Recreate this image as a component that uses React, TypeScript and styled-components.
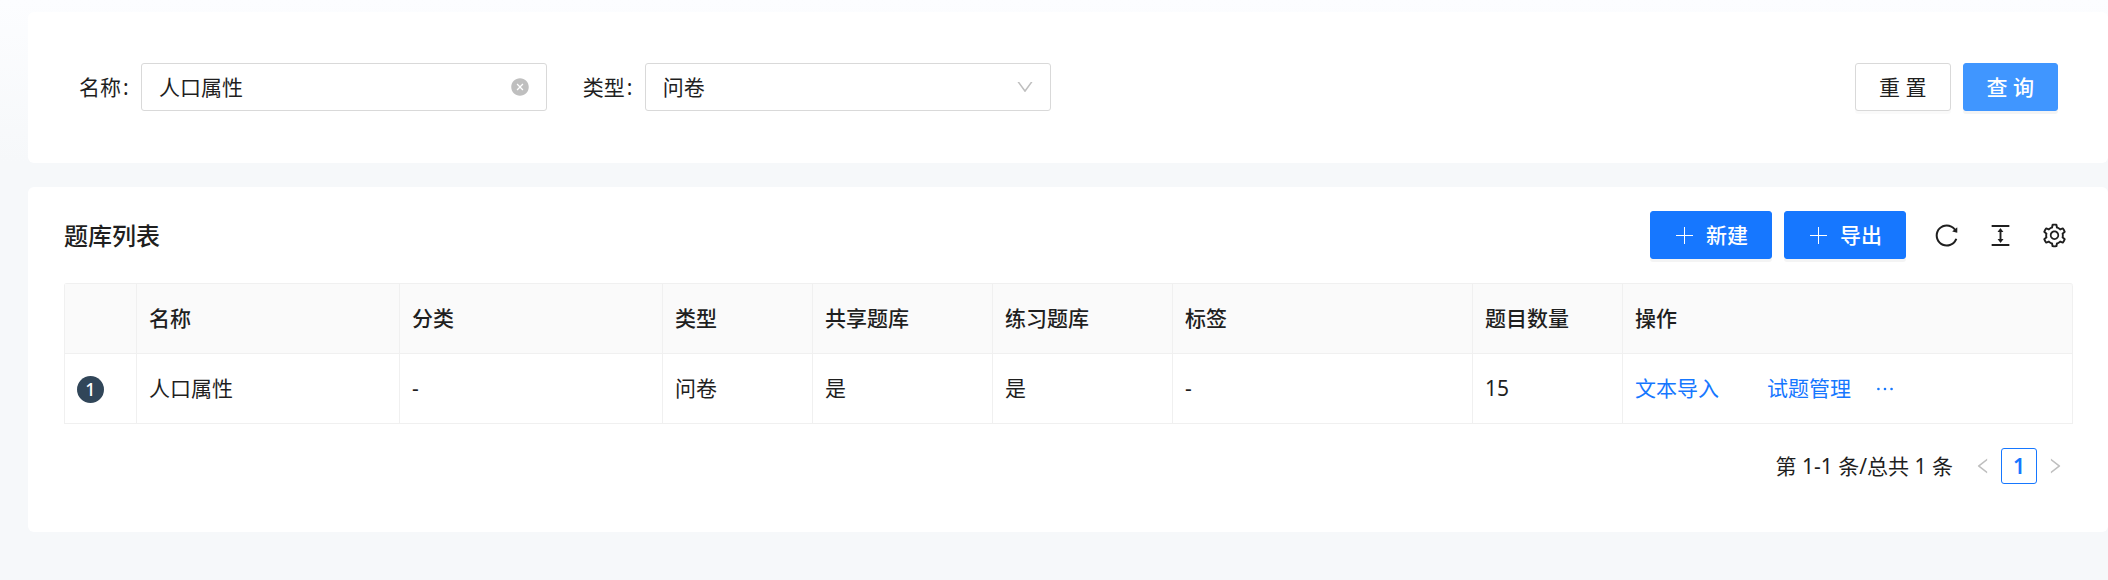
import React, { useState } from "react";
import styled, { createGlobalStyle } from "styled-components";
import {
  AiFillCloseCircle,
  AiOutlineColumnHeight,
  AiOutlineDown,
  AiOutlineEllipsis,
  AiOutlineLeft,
  AiOutlineReload,
  AiOutlineRight,
  AiOutlineSetting,
} from "react-icons/ai";

const GlobalStyle = createGlobalStyle`
  *, *::before, *::after { box-sizing: border-box; }
  html { background: #f6f8fa; }
  body {
    margin: 0;
    color: #1f1f1f;
    font: 400 21px/33px "Noto Sans", "Noto Sans CJK SC", sans-serif;
  }
  button, input, select { font: inherit; color: inherit; margin: 0; }
  svg { display: block; flex: none; }
`;

const Page = styled.main`
  min-height: 100vh;
  padding: 12px 0 48px 28px;
  display: flex;
  flex-direction: column;
  gap: 24px;
  background: linear-gradient(#fcfdff, #f6f8fa 28%);
`;

const SearchCard = styled.form`
  display: grid;
  grid-template-columns: repeat(4, minmax(0, 1fr));
  column-gap: 36px;
  padding: 51px 50px 52px 51px;
  background: #fff;
  border-radius: 6px;
`;

const ListCard = styled.section`
  padding: 24px 35px 48px 36px;
  background: #fff;
  border-radius: 6px;
`;

const Field = styled.div`
  display: flex;
  align-items: center;
`;

const FieldLabel = styled.label`
  flex: none;
  width: 62px;
  &::after {
    content: ":";
    margin-left: 2px;
  }
`;

const InputBox = styled.div`
  flex: 1;
  min-width: 0;
  height: 48px;
  display: flex;
  align-items: center;
  padding: 0 16px 0 17px;
  border: 1px solid #d9d9d9;
  border-radius: 3px;
`;

const TextInput = styled.input`
  flex: 1;
  min-width: 0;
  padding: 0;
  border: 0;
  outline: 0;
  background: none;
`;

const ClearButton = styled.button`
  padding: 0;
  border: 0;
  background: none;
  color: #bfbfbf;
  cursor: pointer;
`;

const SelectBox = styled.div`
  flex: 1;
  min-width: 0;
  display: grid;
  align-items: center;
  > * { grid-area: 1 / 1; }
  > svg {
    justify-self: end;
    margin-right: 16px;
    color: #bfbfbf;
    pointer-events: none;
  }
`;

const Select = styled.select`
  width: 100%;
  height: 48px;
  padding: 0 40px 0 17px;
  appearance: none;
  border: 1px solid #d9d9d9;
  border-radius: 3px;
  background: #fff;
`;

const FormActions = styled.div`
  grid-column: 3 / -1;
  display: flex;
  justify-content: flex-end;
  gap: 12px;
`;

const Button = styled.button<{ $tone?: "primary" | "hover" }>`
  height: 48px;
  padding: 0 23px;
  display: flex;
  align-items: center;
  gap: 11px;
  white-space: pre;
  cursor: pointer;
  border-radius: 3px;
  border: 1px solid ${({ $tone }) =>
    $tone === "primary" ? "#1677ff" : $tone === "hover" ? "#4096ff" : "#d9d9d9"};
  background: ${({ $tone }) =>
    $tone === "primary" ? "#1677ff" : $tone === "hover" ? "#4096ff" : "#fff"};
  color: ${({ $tone }) => ($tone ? "#fff" : "#1f1f1f")};
  font-weight: ${({ $tone }) => ($tone ? 500 : 400)};
  box-shadow: 0 3px 0 ${({ $tone }) => ($tone ? "rgba(0,0,0,.045)" : "rgba(0,0,0,.02)")};
`;

const Toolbar = styled.header`
  display: flex;
  align-items: center;
  justify-content: space-between;
  margin-bottom: 24px;
`;

const Title = styled.h2`
  margin: 0;
  font-size: 24px;
  font-weight: 500;
`;

const ToolbarRight = styled.div`
  display: flex;
  align-items: center;
  gap: 27px;
  padding-right: 5px;
`;

const ButtonGroup = styled.div`
  display: flex;
  gap: 12px;
`;

const IconButton = styled.button`
  padding: 0;
  border: 0;
  background: none;
  cursor: pointer;
`;

const Table = styled.table`
  width: 100%;
  table-layout: fixed;
  border-collapse: separate;
  border-spacing: 0;
  border: 1px solid #f0f0f0;
  border-width: 1px 0 0 1px;
  border-radius: 3px 3px 0 0;
`;

const HeadCell = styled.th<{ $width?: number }>`
  width: ${({ $width }) => ($width ? `${$width}px` : "auto")};
  height: 70px;
  padding: 0 12px;
  text-align: left;
  font-weight: 500;
  background: #fafafa;
  border: 1px solid #f0f0f0;
  border-width: 0 1px 1px 0;
  &:last-child { border-top-right-radius: 3px; }
`;

const Cell = styled.td`
  height: 70px;
  padding: 0 12px;
  border: 1px solid #f0f0f0;
  border-width: 0 1px 1px 0;
`;

const Badge = styled.span`
  display: inline-grid;
  place-items: center;
  width: 27px;
  height: 27px;
  border-radius: 50%;
  background: #314659;
  color: #fff;
  font-size: 18px;
  font-weight: 500;
  line-height: 27px;
`;

const RowActions = styled.div`
  display: flex;
  align-items: center;
  gap: 22px;
`;

const Link = styled.a<{ $spaced?: boolean }>`
  color: #1677ff;
  text-decoration: none;
  margin-right: ${({ $spaced }) => ($spaced ? "26px" : "0")};
`;

const Pagination = styled.nav`
  display: flex;
  align-items: center;
  justify-content: flex-end;
  margin-top: 24px;
`;

const Total = styled.span`
  margin-right: 12px;
`;

const PageButton = styled.button<{ $active?: boolean }>`
  width: 36px;
  height: 36px;
  padding: 0;
  display: grid;
  place-items: center;
  border-radius: 3px;
  border: 1px solid ${({ $active }) => ($active ? "#1677ff" : "transparent")};
  background: ${({ $active }) => ($active ? "#fff" : "none")};
  color: ${({ $active }) => ($active ? "#1677ff" : "#bfbfbf")};
  font-weight: ${({ $active }) => ($active ? 600 : 400)};
`;

const PlusIcon = () => (
  <svg width="21" height="21" viewBox="0 0 21 21" stroke="currentColor" aria-hidden="true">
    <path d="M10.5 2v17M2 10.5h17" />
  </svg>
);

const columns: { title: string; width?: number }[] = [
  { title: "", width: 72 },
  { title: "名称", width: 263 },
  { title: "分类", width: 263 },
  { title: "类型", width: 150 },
  { title: "共享题库", width: 180 },
  { title: "练习题库", width: 180 },
  { title: "标签", width: 300 },
  { title: "题目数量", width: 150 },
  { title: "操作" },
];

const rows = [["人口属性", "-", "问卷", "是", "是", "-", "15"]];

export default function App() {
  const [name, setName] = useState("人口属性");

  return (
    <>
      <GlobalStyle />
      <Page>
        <SearchCard onSubmit={(e) => e.preventDefault()}>
          <Field>
            <FieldLabel htmlFor="name">名称</FieldLabel>
            <InputBox>
              <TextInput id="name" value={name} onChange={(e) => setName(e.target.value)} />
              <ClearButton type="button" aria-label="清除" onClick={() => setName("")}>
                <AiFillCloseCircle size={20} />
              </ClearButton>
            </InputBox>
          </Field>
          <Field>
            <FieldLabel htmlFor="type">类型</FieldLabel>
            <SelectBox>
              <Select id="type" defaultValue="问卷">
                <option>问卷</option>
              </Select>
              <AiOutlineDown size={20} />
            </SelectBox>
          </Field>
          <FormActions>
            <Button type="button" onClick={() => setName("")}>重 置</Button>
            <Button type="submit" $tone="hover">查 询</Button>
          </FormActions>
        </SearchCard>

        <ListCard>
          <Toolbar>
            <Title>题库列表</Title>
            <ToolbarRight>
              <ButtonGroup>
                <Button type="button" $tone="primary"><PlusIcon />新建</Button>
                <Button type="button" $tone="primary"><PlusIcon />导出</Button>
              </ButtonGroup>
              <IconButton type="button" aria-label="刷新"><AiOutlineReload size={27} /></IconButton>
              <IconButton type="button" aria-label="密度"><AiOutlineColumnHeight size={27} /></IconButton>
              <IconButton type="button" aria-label="列设置"><AiOutlineSetting size={27} /></IconButton>
            </ToolbarRight>
          </Toolbar>

          <Table>
            <thead>
              <tr>
                {columns.map((c, i) => (
                  <HeadCell key={i} scope="col" $width={c.width}>{c.title}</HeadCell>
                ))}
              </tr>
            </thead>
            <tbody>
              {rows.map((row, r) => (
                <tr key={r}>
                  <Cell><Badge>{r + 1}</Badge></Cell>
                  {row.map((value, i) => <Cell key={i}>{value}</Cell>)}
                  <Cell>
                    <RowActions>
                      <Link href="#import" $spaced>文本导入</Link>
                      <Link href="#manage">试题管理</Link>
                      <Link href="#more" aria-label="更多"><AiOutlineEllipsis size={24} /></Link>
                    </RowActions>
                  </Cell>
                </tr>
              ))}
            </tbody>
          </Table>

          <Pagination aria-label="分页">
            <Total>第 1-1 条/总共 1 条</Total>
            <PageButton type="button" aria-label="上一页" disabled><AiOutlineLeft size={20} /></PageButton>
            <PageButton type="button" $active>1</PageButton>
            <PageButton type="button" aria-label="下一页" disabled><AiOutlineRight size={20} /></PageButton>
          </Pagination>
        </ListCard>
      </Page>
    </>
  );
}
